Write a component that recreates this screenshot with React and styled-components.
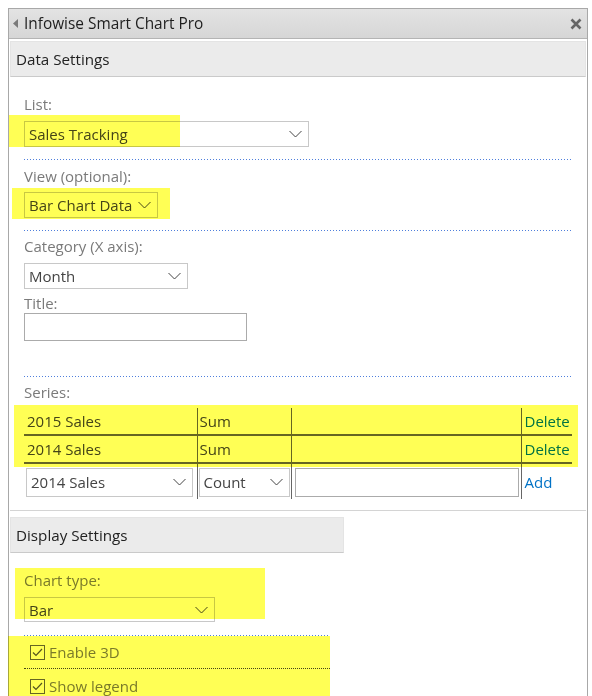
import React from 'react'
import styled, { createGlobalStyle } from 'styled-components'

const GlobalStyle = createGlobalStyle`
  html, body {
    margin: 0;
    overflow: hidden;
    background: #fff;
  }
  body {
    font-family: "Open Sans", "Noto Sans", sans-serif;
    font-size: 15px;
  }
`

const Page = styled.div`
  padding: 8px 0 0 8px;
  height: 688px;
`
const Panel = styled.div`
  width: 578px;
  height: 100%;
  border: 1px solid #a8a8a8;
  border-bottom: none;
`
const Header = styled.div`
  display: flex;
  align-items: center;
  height: 29px;
  padding: 0 5px 0 4px;
  background: linear-gradient(#e3e3e3, #d6d6d6);
  border-bottom: 1px solid #b4b4b4;
  color: #1e1e1e;
  font-size: 15.4px;
`
const Title = styled.span`
  margin-left: 6px;
`
const CloseButton = styled.span`
  display: flex;
  margin-left: auto;
`
const Body = styled.div`
  padding: 2px 1px 0;
`
const SectionBar = styled.div`
  display: flex;
  align-items: center;
  width: ${(p) => p.$width || 'auto'};
  height: 34px;
  padding-left: 5px;
  background: #ebebeb;
  border: 1px solid #e4e4e4;
  border-bottom-color: #cacaca;
  color: #222;
  font-size: 15.2px;
  box-sizing: content-box;
`
const DataSection = styled.div`
  padding: 0 13px 11px 14px;
  border-bottom: 1px solid #d4d4d4;
`
const DisplaySection = styled.div`
  width: 333px;
  margin-top: 6px;
`
const DisplayContent = styled.div`
  padding: 0 0 0 14px;
`
const Field = styled.div`
  position: relative;
  margin-top: ${(p) => p.$gap || 0}px;
`
const Label = styled.div`
  height: 20px;
  line-height: 20px;
  color: #7a7a7a;
`
const Select = styled.div`
  display: flex;
  align-items: center;
  justify-content: space-between;
  box-sizing: border-box;
  width: ${(p) => p.$width}px;
  height: ${(p) => p.$height || 26}px;
  margin-top: ${(p) => (p.$gap === undefined ? 7 : p.$gap)}px;
  padding: 0 6px 0 4px;
  border: 1px solid #c8c8c8;
  background: #fff;
  color: #444;
`
const TextBox = styled.div`
  box-sizing: border-box;
  width: ${(p) => p.$width}px;
  height: ${(p) => p.$height}px;
  border: 1px solid #ababab;
  background: #fff;
`
const Rule = styled.div`
  width: ${(p) => p.$width || '100%'};
  height: 1px;
  margin-top: ${(p) => p.$gap}px;
  background: repeating-linear-gradient(
    to right,
    ${(p) => p.$color || '#4f7fdc'} 0 1px,
    transparent 1px 3px
  );
`
const Mark = styled.div`
  position: absolute;
  top: ${(p) => p.$top}px;
  left: ${(p) => p.$left}px;
  width: ${(p) => p.$width}px;
  height: ${(p) => p.$height}px;
  background: #ffff55;
  mix-blend-mode: multiply;
  pointer-events: none;
`
const SeriesTable = styled.table`
  width: 548px;
  margin-top: 6px;
  border-collapse: collapse;
  table-layout: fixed;
  color: #444;
`
const Cell = styled.td`
  padding: 0 0 0 ${(p) => p.$pad || 2}px;
  height: 26px;
  border-right: ${(p) => (p.$last ? 'none' : '1px solid #666')};
  white-space: nowrap;
  vertical-align: middle;
`
const Row = styled.tr`
  border-bottom: ${(p) => (p.$open ? 'none' : '2px solid #666')};
  & > td {
    height: ${(p) => (p.$open ? 34 : 26)}px;
    padding-top: ${(p) => (p.$open ? 1 : 0)}px;
  }
`
const Link = styled.a`
  color: #0072c6;
  text-decoration: none;
  cursor: pointer;
`
const CheckList = styled.div`
  position: relative;
  width: 306px;
`
const CheckRow = styled.label`
  display: flex;
  align-items: center;
  height: ${(p) => (p.$last ? 34 : 32)}px;
  padding-left: 6px;
  border-bottom: ${(p) => (p.$last ? 'none' : '1px dotted #444')};
  color: #7a7a7a;
`
const Box = styled.span`
  display: flex;
  align-items: center;
  justify-content: center;
  box-sizing: border-box;
  width: 15px;
  height: 15px;
  margin-right: 4px;
  border: 1px solid #666;
  background: #fff;
`

const Chevron = () => (
  <svg width="13" height="8" viewBox="0 0 13 8">
    <polyline points="0.5,1 6.5,7 12.5,1" fill="none" stroke="#444" strokeWidth="1" />
  </svg>
)

const Dropdown = ({ value, width, height, gap }) => (
  <Select $width={width} $height={height} $gap={gap}>
    <span>{value}</span>
    <Chevron />
  </Select>
)

const Check = ({ label, last }) => (
  <CheckRow $last={last}>
    <Box>
      <svg width="11" height="9" viewBox="0 0 11 9">
        <polyline points="1,4.5 4,7.5 10,1" fill="none" stroke="#555" strokeWidth="1.2" />
      </svg>
    </Box>
    {label}
  </CheckRow>
)

const series = [
  { id: 1, name: '2015 Sales', fn: 'Sum' },
  { id: 2, name: '2014 Sales', fn: 'Sum' },
]

const App = () => {
  return (
    <Page>
      <GlobalStyle />
      <Panel>
        <Header>
          <svg width="5" height="9" viewBox="0 0 5 9">
            <polygon points="5,0 0,4.5 5,9" fill="#7a7a7a" />
          </svg>
          <Title>Infowise Smart Chart Pro</Title>
          <CloseButton>
            <svg width="12" height="12" viewBox="0 0 12 12">
              <path d="M1.5 1.5 L10.5 10.5 M10.5 1.5 L1.5 10.5" stroke="#666" strokeWidth="2.6" />
            </svg>
          </CloseButton>
        </Header>
        <Body>
          <SectionBar>Data Settings</SectionBar>
          <DataSection>
            <Field $gap={17}>
              <Label>List:</Label>
              <Dropdown value="Sales Tracking" width={285} />
              <Mark $top={21} $left={-15} $width={171} $height={32} />
            </Field>
            <Rule $gap={12} />
            <Field $gap={6}>
              <Label>View (optional):</Label>
              <Dropdown value="Bar Chart Data" width={134} gap={6} />
              <Mark $top={22} $left={-12} $width={158} $height={31} />
            </Field>
            <Rule $gap={12} />
            <Field $gap={5}>
              <Label>Category (X axis):</Label>
              <Dropdown value="Month" width={164} />
            </Field>
            <Field $gap={4}>
              <Label>Title:</Label>
              <TextBox $width={223} $height={28} />
            </Field>
            <Rule $gap={35} />
            <Field $gap={5}>
              <Label>Series:</Label>
              <SeriesTable>
                <colgroup>
                  <col style={{ width: 173 }} />
                  <col style={{ width: 94 }} />
                  <col style={{ width: 230 }} />
                  <col style={{ width: 51 }} />
                </colgroup>
                <tbody>
                  {series.map((s) => (
                    <Row key={s.id}>
                      <Cell $pad={3}>{s.name}</Cell>
                      <Cell $pad={2}>{s.fn}</Cell>
                      <Cell />
                      <Cell $last $pad={3}>
                        <Link>Delete</Link>
                      </Cell>
                    </Row>
                  ))}
                  <Row $open>
                    <Cell $pad={2}>
                      <Dropdown value="2014 Sales" width={167} height={29} gap={0} />
                    </Cell>
                    <Cell $pad={1}>
                      <Dropdown value="Count" width={91} height={29} gap={0} />
                    </Cell>
                    <Cell $pad={3}>
                      <TextBox $width={224} $height={29} />
                    </Cell>
                    <Cell $last $pad={3}>
                      <Link>Add</Link>
                    </Cell>
                  </Row>
                </tbody>
              </SeriesTable>
              <Mark $top={23} $left={-10} $width={564} $height={62} />
            </Field>
          </DataSection>
          <DisplaySection>
            <SectionBar $width="327px">Display Settings</SectionBar>
            <DisplayContent>
              <Field $gap={17}>
                <Label>Chart type:</Label>
                <Dropdown value="Bar" width={191} height={25} />
                <Mark $top={-2} $left={-9} $width={250} $height={51} />
              </Field>
              <Rule $gap={13} $width="306px" />
              <CheckList>
                <Check label="Enable 3D" />
                <Check label="Show legend" last />
                <Mark $top={0} $left={-16} $width={322} $height={70} />
              </CheckList>
            </DisplayContent>
          </DisplaySection>
        </Body>
      </Panel>
    </Page>
  )
}

export default App
